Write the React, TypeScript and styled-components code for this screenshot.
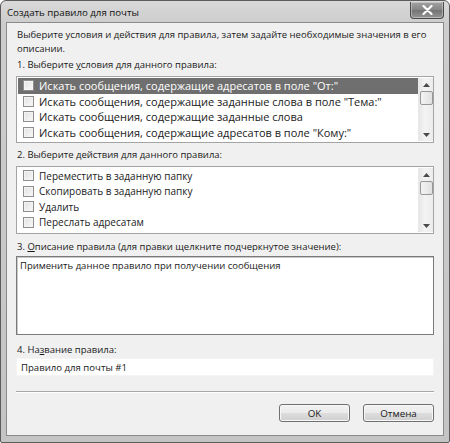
import React from "react";
import styled, { createGlobalStyle } from "styled-components";

const Global = createGlobalStyle`
  html, body { margin: 0; padding: 0; background: #ffffff; }
  body { font-family: "Open Sans", "Noto Sans", sans-serif; }
  * { box-sizing: border-box; }
`;

const FONT = `"Open Sans", "Noto Sans", sans-serif`;

const Window = styled.div`
  width: 450px;
  height: 443px;
  display: flex;
  flex-direction: column;
  border: 1px solid #5c5c5c;
  border-radius: 6px 6px 2px 2px;
  background: linear-gradient(180deg, #d9d9d9 0px, #cdcdcd 22px, #c4c4c4 100%);
  overflow: hidden;
`;

const TitleBar = styled.div`
  height: 21px;
  display: flex;
  align-items: center;
  justify-content: space-between;
  padding: 0 5px 0 6px;
`;

const Title = styled.span`
  font-family: ${FONT};
  font-size: 9.7px;
  color: #111;
  padding-top: 2px;
`;

const CloseBtn = styled.div`
  width: 34px;
  height: 17px;
  margin-top: -3px;
  border: 1px solid #4a4a4a;
  border-top: none;
  border-radius: 0 0 4px 4px;
  background: linear-gradient(180deg, #a2a2a2 0%, #858585 50%, #737373 51%, #949494 100%);
  box-shadow: inset 0 0 0 1px rgba(255, 255, 255, 0.35);
  display: flex;
  align-items: center;
  justify-content: center;
`;

const Client = styled.div`
  flex: 1;
  margin: 0 5px 6px 5px;
  border: 1px solid #8a8a8a;
  background: #f0f0f0;
  padding: 0 9px;
  display: flex;
  flex-direction: column;
  font-family: ${FONT};
  font-size: 9.5px;
  color: #1a1a1a;
`;

const Intro = styled.div`
  margin-top: 5px;
  line-height: 14px;
  padding-left: 1px;
`;

const Label = styled.div<{ $mt: number }>`
  margin-top: ${(p) => p.$mt}px;
  line-height: 14px;
  padding-left: 1px;
`;

const U = styled.span`
  text-decoration: underline;
`;

const ListBox = styled.div<{ $h: number; $fs: number }>`
  margin-top: 4px;
  height: ${(p) => p.$h}px;
  border: 1px solid #a4a4a4;
  background: #ffffff;
  display: flex;
  padding: 1px 0 1px 1px;
  font-size: ${(p) => p.$fs}px;
`;

const Rows = styled.div`
  flex: 1;
  display: flex;
  flex-direction: column;
`;

const Row = styled.div<{ $sel?: boolean }>`
  height: 15.5px;
  display: flex;
  align-items: center;
  padding-left: 5px;
  gap: 5px;
  background: ${(p) => (p.$sel ? "#6f6f6f" : "transparent")};
  color: ${(p) => (p.$sel ? "#ffffff" : "#1a1a1a")};
  white-space: nowrap;
`;

const Check = styled.span`
  width: 11px;
  height: 11px;
  flex: none;
  border: 1px solid #8e8e8e;
  background: linear-gradient(135deg, #e2e2e2 0%, #f8f8f8 100%);
  box-shadow: inset 0 0 0 1px #f4f4f4;
`;

const ScrollBar = styled.div`
  width: 15px;
  flex: none;
  display: flex;
  flex-direction: column;
  align-items: center;
  background: linear-gradient(90deg, #e6e6e6, #f3f3f3 40%, #ececec);
  border-left: 1px solid #e8e8e8;
`;

const Arrow = styled.div`
  height: 13px;
  width: 100%;
  display: flex;
  align-items: center;
  justify-content: center;
`;

const Thumb = styled.div`
  width: 13px;
  height: 14px;
  border: 1px solid #979797;
  border-radius: 2px;
  background: linear-gradient(90deg, #f4f4f4, #e0e0e0);
`;

const Track = styled.div`
  flex: 1;
`;

const DescBox = styled.div`
  margin-top: 2px;
  height: 79px;
  border: 1px solid #7a7a7a;
  box-shadow: inset 1px 1px 0 #c8c8c8;
  background: #ffffff;
  padding: 2px 3px;
  line-height: 14px;
`;

const Input = styled.div`
  margin-top: 1px;
  height: 18px;
  background: #ffffff;
  border: 1px solid #f4f4f4;
  padding: 0 4px;
  display: flex;
  align-items: center;
  font-size: 9.6px;
`;

const Separator = styled.div`
  margin-top: 15px;
  height: 2px;
  border-top: 1px solid #a8a8a8;
  border-bottom: 1px solid #ffffff;
`;

const Buttons = styled.div`
  margin-top: 11px;
  display: flex;
  justify-content: flex-end;
  gap: 13px;
`;

const Button = styled.div`
  width: 71px;
  height: 18px;
  border: 1px solid #707070;
  border-radius: 3px;
  background: linear-gradient(180deg, #f2f2f2 0%, #ebebeb 48%, #dddddd 52%, #cfcfcf 100%);
  box-shadow: inset 0 0 0 1px #f8f8f8;
  display: flex;
  align-items: center;
  justify-content: center;
  font-size: 9.8px;
  color: #1a1a1a;
`;

const UpArrow = () => (
  <svg width="7" height="4" viewBox="0 0 7 4">
    <path d="M0 4 L3.5 0 L7 4 Z" fill="#4a4a4a" />
  </svg>
);
const DownArrow = () => (
  <svg width="7" height="4" viewBox="0 0 7 4">
    <path d="M0 0 L3.5 4 L7 0 Z" fill="#4a4a4a" />
  </svg>
);

const Scroll = () => (
  <ScrollBar>
    <Arrow>
      <UpArrow />
    </Arrow>
    <Thumb />
    <Track />
    <Arrow>
      <DownArrow />
    </Arrow>
  </ScrollBar>
);

const conditions = [
  "Искать сообщения, содержащие адресатов в поле \"От:\"",
  "Искать сообщения, содержащие заданные слова в поле \"Тема:\"",
  "Искать сообщения, содержащие заданные слова",
  "Искать сообщения, содержащие адресатов в поле \"Кому:\"",
];

const actions = [
  "Переместить в заданную папку",
  "Скопировать в заданную папку",
  "Удалить",
  "Переслать адресатам",
];

export default function App() {
  return (
    <>
      <Global />
      <Window>
        <TitleBar>
          <Title>Создать правило для почты</Title>
          <CloseBtn>
            <svg width="11" height="10" viewBox="0 0 11 10">
              <path d="M1.5 1 L9.5 9 M9.5 1 L1.5 9" stroke="#ffffff" strokeWidth="2.2" strokeLinecap="round" />
            </svg>
          </CloseBtn>
        </TitleBar>
        <Client>
          <Intro>
            Выберите условия и действия для правила, затем задайте необходимые значения в его
            <br />
            описании.
          </Intro>
          <Label $mt={2}>
            1. Выберите <U>у</U>словия для данного правила:
          </Label>
          <ListBox $h={67} $fs={11}>
            <Rows>
              {conditions.map((c, i) => (
                <Row key={c} $sel={i === 0}>
                  <Check />
                  {c}
                </Row>
              ))}
            </Rows>
            <Scroll />
          </ListBox>
          <Label $mt={5}>
            2. Выберите <U>д</U>ействия для данного правила:
          </Label>
          <ListBox $h={68} $fs={10}>
            <Rows>
              {actions.map((c) => (
                <Row key={c}>
                  <Check />
                  {c}
                </Row>
              ))}
            </Rows>
            <Scroll />
          </ListBox>
          <Label $mt={6}>
            3. <U>О</U>писание правила (для правки щелкните подчеркнутое значение):
          </Label>
          <DescBox>Применить данное правило при получении сообщения</DescBox>
          <Label $mt={8}>
            4. На<U>з</U>вание правила:
          </Label>
          <Input>Правило для почты #1</Input>
          <Separator />
          <Buttons>
            <Button>OK</Button>
            <Button>Отмена</Button>
          </Buttons>
        </Client>
      </Window>
    </>
  );
}
